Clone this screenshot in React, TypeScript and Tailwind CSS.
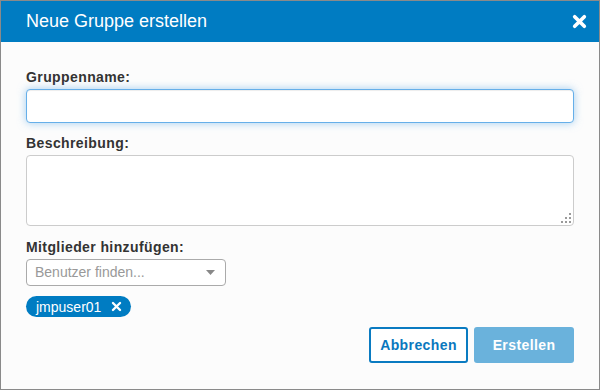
import type { ReactNode } from "react";

const font = { fontFamily: '"Liberation Sans", Arial, sans-serif' };

function Label({ children }: { children: ReactNode }) {
  return (
    <div className="mb-[2px] text-[14px] font-bold leading-5 tracking-[0.4px] text-[#333]">{children}</div>
  );
}

function CloseIcon({ size, stroke }: { size: number; stroke: number }) {
  return (
    <svg width={size} height={size} viewBox="0 0 14 14" fill="none">
      <path d="M2.5 2.5 L11.5 11.5 M11.5 2.5 L2.5 11.5" stroke="white" strokeWidth={stroke} strokeLinecap="round" />
    </svg>
  );
}

function Grip() {
  // dotted resize handle in the textarea corner
  const dots = [
    [8, 0],
    [4, 4],
    [8, 4],
    [0, 8],
    [4, 8],
    [8, 8],
  ];
  return (
    <svg className="absolute bottom-[3px] right-[3px]" width="10" height="10" viewBox="0 0 10 10">
      {dots.map(([x, y], i) => (
        <rect key={i} x={x} y={y} width="2" height="2" fill="#9a9a9a" />
      ))}
    </svg>
  );
}

export default function App() {
  return (
    <div style={font} className="flex h-[390px] w-[600px] flex-col border border-[#8a8a8a] bg-[#fcfcfc]">
      <div className="flex h-[41px] shrink-0 items-center justify-between bg-[#007cc2] pl-[25px] pr-[12px]">
        <span className="text-[18px] text-white">Neue Gruppe erstellen</span>
        <CloseIcon size={15} stroke={3.4} />
      </div>

      <div className="flex flex-col px-[25px] pt-[25px]">
        <Label>Gruppenname:</Label>
        <input
          type="text"
          className="h-[34px] w-full rounded-[4px] border border-[#66afe9] bg-white px-3 text-[14px] outline-none shadow-[inset_0_1px_1px_rgba(0,0,0,0.075),0_0_8px_rgba(102,175,233,0.6)]"
        />

        <div className="mt-[10px]">
          <Label>Beschreibung:</Label>
        </div>
        <div className="relative h-[71px]">
          <textarea className="h-full w-full resize-none rounded-[4px] border border-[#cccccc] bg-white px-3 py-2 text-[14px] outline-none" />
          <Grip />
        </div>

        <div className="mt-[11px]">
          <Label>Mitglieder hinzufügen:</Label>
        </div>
        <div className="flex h-[27px] w-[200px] items-center justify-between rounded-[4px] border border-[#aaaaaa] bg-white pl-[8px] pr-[10px]">
          <span className="text-[14px] text-[#999]">Benutzer finden...</span>
          <svg width="9" height="5" viewBox="0 0 9 5">
            <path d="M0 0 H9 L4.5 5 Z" fill="#888" />
          </svg>
        </div>

        <div className="mt-[10px] flex">
          <div className="flex h-[21px] items-center gap-[10px] rounded-full bg-[#007cc2] pl-[10px] pr-[9px]">
            <span className="text-[14px] leading-none text-white">jmpuser01</span>
            <CloseIcon size={11} stroke={3} />
          </div>
        </div>

        <div className="mt-[10px] flex justify-end gap-[6px]">
          <button className="h-[36px] w-[99px] rounded-[3px] border-2 border-[#0a7bc1] bg-white text-[14px] font-bold tracking-[0.4px] text-[#0a78be]">
            Abbrechen
          </button>
          <button className="h-[36px] w-[100px] rounded-[3px] bg-[#6ab2dc] text-[14px] font-bold tracking-[0.4px] text-white">
            Erstellen
          </button>
        </div>
      </div>
    </div>
  );
}
